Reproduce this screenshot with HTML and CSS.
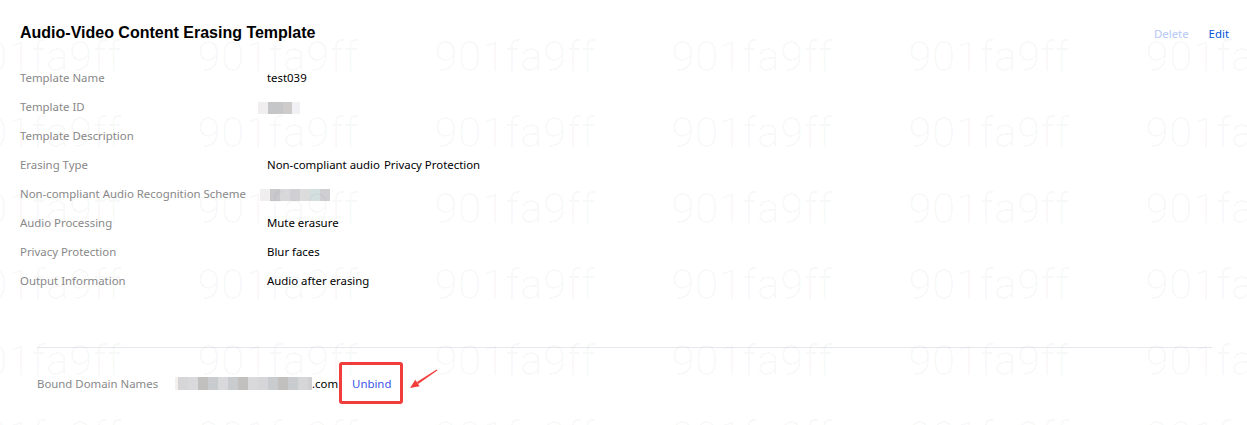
FILE: index.html
```html
<!DOCTYPE html>
<html lang="en">
<head>
<meta charset="UTF-8" />
<title>Audio-Video Content Erasing Template</title>
<link rel="stylesheet" href="styles.css">
</head>
<body>
  <div class="page">
    <header class="head">
      <h1>Audio-Video Content Erasing Template</h1>
      <div class="ops">
        <a class="op disabled">Delete</a>
        <a class="op" href="#">Edit</a>
      </div>
    </header>

    <!-- template details -->
    <div class="info">
      <div class="row"><span class="label">Template Name</span><span class="value">test039</span></div>
      <div class="row"><span class="label">Template ID</span><span class="value"><span class="mask mask-id"><i></i><i></i><i></i><i></i></span></span></div>
      <div class="row"><span class="label">Template Description</span><span class="value"></span></div>
      <div class="row"><span class="label">Erasing Type</span><span class="value"><span class="tag">Non-compliant audio</span><span class="tag">Privacy Protection</span></span></div>
      <div class="row"><span class="label">Non-compliant Audio Recognition Scheme</span><span class="value"><span class="mask mask-scheme"><i></i><i></i><i></i><i></i><i></i><i></i><i></i></span></span></div>
      <div class="row"><span class="label">Audio Processing</span><span class="value">Mute erasure</span></div>
      <div class="row"><span class="label">Privacy Protection</span><span class="value">Blur faces</span></div>
      <div class="row"><span class="label">Output Information</span><span class="value">Audio after erasing</span></div>
    </div>

    <!-- bound domains -->
    <div class="bound">
      <div class="bound-row">
        <span class="bound-label">Bound Domain Names</span>
        <span class="domain"><span class="mask mask-domain"><i></i><i></i><i></i><i></i><i></i><i></i><i></i><i></i><i></i><i></i><i></i><i></i><i></i><i></i><i></i></span>.com</span>
        <span class="mark">
          <a class="unbind" href="#">Unbind</a>
          <svg class="arrow" width="32" height="24" viewBox="0 0 32 24">
            <polygon points="3,19 8.3,10.7 12.7,17.3" fill="#f23d3d" />
            <polygon points="9.9,13.1 29.7,0.6 30.3,1.4 11.1,14.9" fill="#f23d3d" />
          </svg>
        </span>
      </div>
    </div>

    <div class="watermark" aria-hidden="true">
      <span>901fa9ff</span><span>901fa9ff</span><span>901fa9ff</span><span>901fa9ff</span><span>901fa9ff</span><span>901fa9ff</span>
      <span>901fa9ff</span><span>901fa9ff</span><span>901fa9ff</span><span>901fa9ff</span><span>901fa9ff</span><span>901fa9ff</span>
      <span>901fa9ff</span><span>901fa9ff</span><span>901fa9ff</span><span>901fa9ff</span><span>901fa9ff</span><span>901fa9ff</span>
      <span>901fa9ff</span><span>901fa9ff</span><span>901fa9ff</span><span>901fa9ff</span><span>901fa9ff</span><span>901fa9ff</span>
      <span>901fa9ff</span><span>901fa9ff</span><span>901fa9ff</span><span>901fa9ff</span><span>901fa9ff</span><span>901fa9ff</span>
      <span>901fa9ff</span><span>901fa9ff</span><span>901fa9ff</span><span>901fa9ff</span><span>901fa9ff</span><span>901fa9ff</span>
    </div>
  </div>
</body>
</html>
```

FILE: styles.css
```css
/* ---------- Theme ---------- */
:root {
  --blue: #0052d9;
  --label: #888;
  --text: #000;
  --line: #e7e7ee;
  --red: #f23d3d;
}
* { box-sizing: border-box; }
body {
  margin: 0;
  background: #fff;
  color: var(--text);
  font-family: "Noto Sans", "Open Sans", sans-serif;
  font-size: 11.4px;
}
/* ---------- Layout ---------- */
.page {
  position: relative;
  height: 425px;
  overflow: hidden;
  padding: 21px 18px 0 20px;
}
.head {
  display: flex;
  justify-content: space-between;
  align-items: center;
  height: 24px;
}
h1 {
  margin: 0;
  font-family: "Liberation Sans", Arial, sans-serif;
  font-size: 16px;
  font-weight: 700;
  color: #000;
}
.ops { display: flex; gap: 20px; padding-top: 1px; }
.op { color: var(--blue); text-decoration: none; }
.op.disabled { color: #b5c7f7; }

.info { margin-top: 18px; }
.row { display: flex; align-items: center; height: 29px; }
.label { width: 247px; color: var(--label); }
.value { color: var(--text); }
.tag + .tag { margin-left: 4px; }

/* pixelated placeholders */
.mask { display: inline-flex; vertical-align: middle; }
.mask i { display: block; width: 10px; height: 12px; background: #d6d6d8; }
.mask-id { margin-left: -9px; }
.mask-id i:nth-child(1) { background: #f0eeee; }
.mask-id i:nth-child(2) { background: #c4c6c8; width: 15px; }
.mask-id i:nth-child(3) { background: #cfcbcb; width: 9px; }
.mask-id i:nth-child(4) { background: #f0f0f5; width: 8px; }
.mask-scheme { margin-left: -7px; }
.mask-scheme i:nth-child(1) { background: #f0eeee; }
.mask-scheme i:nth-child(2) { background: #c9c9cb; }
.mask-scheme i:nth-child(3) { background: #d8d8da; }
.mask-scheme i:nth-child(4) { background: #d0d0d4; }
.mask-scheme i:nth-child(5) { background: #dcdcdc; }
.mask-scheme i:nth-child(6) { background: #d3dede; }
.mask-scheme i:nth-child(7) { background: #cfcfd1; }

.bound {
  margin: 52px 17px 0 17px;
  border-top: 1px solid var(--line);
}
.bound-row { display: flex; align-items: center; padding-top: 14px; }
.bound-label { width: 138px; color: var(--label); }
.domain { display: inline-flex; align-items: center; color: var(--text); }
.mask-domain i { width: 10px; height: 13px; }
.mask-domain i:nth-child(odd) { background: #c9cccf; }
.mask-domain i:nth-child(3n) { background: #d9d9db; }
.mask-domain i:nth-child(4n) { background: #c2c0be; }
.mask-domain i:nth-child(1) { background: #f3f0ee; width: 3px; }
.mask-domain i:nth-child(15) { background: #d0d0d0; width: 4px; }

.mark { position: relative; display: inline-flex; margin-left: 1px; }
.unbind {
  display: inline-flex;
  align-items: center;
  height: 42px;
  padding: 0 9px 0 10px;
  border: 3px solid var(--red);
  border-radius: 3px;
  color: #3a56e8;
  text-decoration: none;
}
.arrow { position: absolute; left: 68px; top: 7px; }

/* ---------- Watermark ---------- */
.watermark {
  position: absolute;
  left: -40px;
  top: 34px;
  display: grid;
  grid-template-columns: repeat(6, 237px);
  grid-auto-rows: 76px;
  pointer-events: none;
  font-family: Roboto, "Noto Sans", sans-serif;
  font-weight: 300;
  font-size: 43px;
  line-height: 44px;
  color: rgba(40, 40, 90, 0.03);
}
```
